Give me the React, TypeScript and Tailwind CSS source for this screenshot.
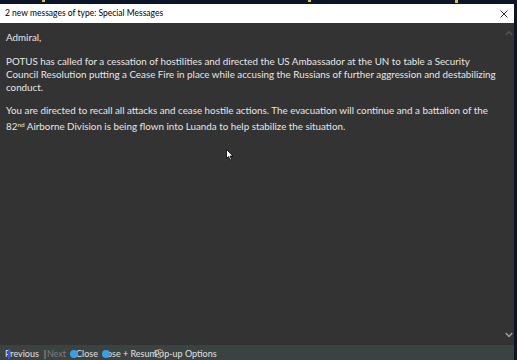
export default function App() {
  return (
    <div className="w-[517px] h-[360px] bg-[#0d1628] relative overflow-hidden" style={{ fontFamily: 'Lato, "Noto Sans", sans-serif' }}>
      <div className="absolute left-[42px] top-0 w-[3px] h-[2px] bg-[#d8c24a]" />
      <div className="absolute left-[308px] top-0 w-[3px] h-[2px] bg-[#d8c24a]" />
      <div className="absolute left-[455px] top-0 w-[3px] h-[3px] bg-[#d8c24a]" />
      <div className="pt-[4px] w-[514px] h-full flex flex-col">
        <div className="h-[19px] bg-white flex items-center justify-between pl-[5px] pr-[6px]">
          <span className="text-[8.5px] text-black leading-none">2 new messages of type: Special Messages</span>
          <svg width="8" height="8" viewBox="0 0 8 8" className="mt-[1px]">
            <path d="M0.5 0.5 L7.5 7.5 M7.5 0.5 L0.5 7.5" stroke="#333" strokeWidth="1" />
          </svg>
        </div>
        <div className="flex-1 bg-[#333333] relative">
          <div className="pl-[6px] pr-[9px] pt-[8px] text-[#e6e6e6] text-[9.8px] leading-[13px] whitespace-nowrap">
            <p className="mb-[11px]">Admiral,</p>
            <p className="mb-[10px]">
              POTUS has called for a cessation of hostilities and directed the US Ambassador at the UN to table a Security
              <br />
              Council Resolution putting a Cease Fire in place while accusing the Russians of further aggression and destabilizing
              <br />
              conduct.
            </p>
            <p>
              You are directed to recall all attacks and cease hostile actions. The evacuation will continue and a battalion of the
              <span className="block mt-[3px]">
                82<sup className="text-[6.5px]">nd</sup> Airborne Division is being flown into Luanda to help stabilize the situation.
              </span>
            </p>
          </div>
          <svg width="8" height="6" viewBox="0 0 8 6" className="absolute right-[1px] top-[7px]">
            <path d="M0.8 5 L4 1.6 L7.2 5" stroke="#555555" strokeWidth="1.5" fill="none" />
          </svg>
          <svg width="8" height="6" viewBox="0 0 8 6" className="absolute right-[1px] bottom-[7px]">
            <path d="M0.8 1 L4 4.4 L7.2 1" stroke="#a0a0a0" strokeWidth="1.5" fill="none" />
          </svg>
          <div className="absolute left-[226px] top-[126px]">
            <svg width="8" height="12" viewBox="0 0 8 12">
              <path d="M0.5 0.5 L0.5 9.5 L2.5 7.5 L4 11 L5.5 10.4 L4 7 L7 7 Z" fill="white" stroke="black" strokeWidth="0.8" />
            </svg>
          </div>
        </div>
        <div className="h-[15px] bg-[#3b4242] flex items-center text-[9px] text-[#e0e0e0] leading-[12px] pl-[5px] pt-[3px] whitespace-nowrap overflow-hidden">
          <span className="relative">Previous<span className="absolute left-[3px] top-[1px] w-[2px] h-[10px] bg-[#2a55ff]" /></span>
          <span className="ml-[5px] text-[#7b7b7b] flex items-center"><span className="inline-block w-[2px] h-[9px] bg-[#6a6a6a] mr-[1px]" />Next</span>
          <span className="ml-[4px] flex items-center"><span className="inline-block w-[8px] h-[8px] rounded-full bg-[#3aa0e6] mr-[-2px] relative z-10" />Close</span>
          <span className="ml-[4px] flex items-center"><span className="inline-block w-[8px] h-[8px] rounded-full bg-[#3aa0e6] mr-[-3px] relative z-10" />ose + Resum</span>
          <span className="ml-[-3px] relative"><span className="absolute left-[1px] top-[1px] w-[9px] h-[9px] rounded-full border border-[#c9a66b]" />Pop-up Options</span>
        </div>
      </div>
    </div>
  );
}
